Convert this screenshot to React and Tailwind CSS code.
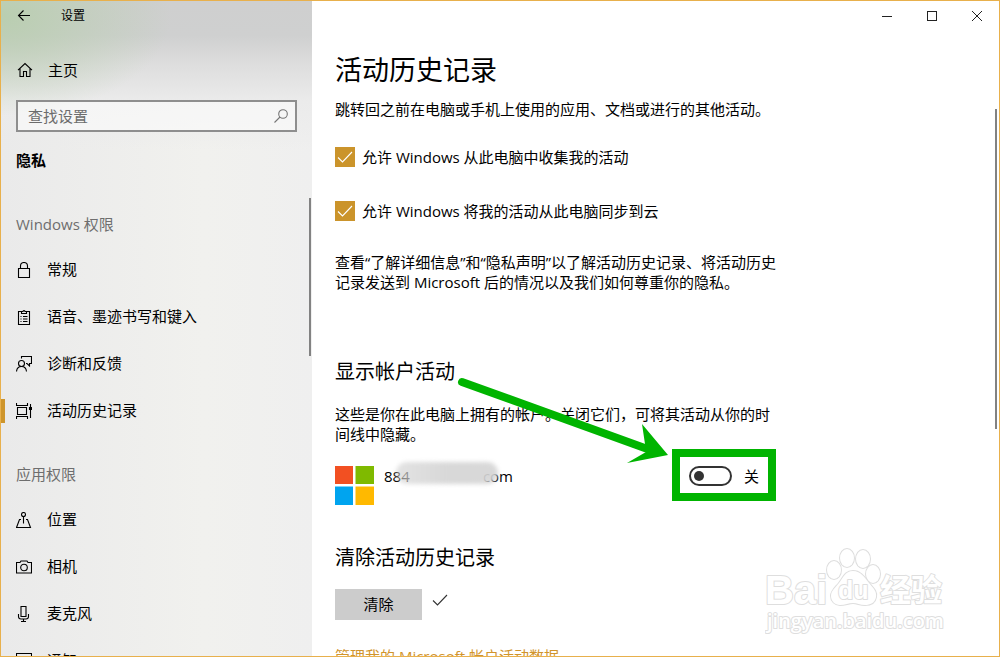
import React from 'react';

const icons = {
  back: <path d="M14 7.500H2.500M7.500 2.500l-5 5 5 5" />,
  home: <path d="M1 8.200 8 1.500l7 6.700M3 6.500v8h3.500v-5h3v5H13v-8" />,
  lock: <path d="M2.500 6.500h11v9h-11zM4.500 6.500V4a3.500 3.500 0 0 1 7 0v2.500" />,
  clipboard: (
    <path d="M5.500 2.500h-3v13h11v-13h-3M5.500 4.500v-2H7a1 1 0 0 1 2 0h1.500v2zM4.500 7.500h1M7 7.500h4.500M4.500 10h1M7 10h4.500M4.500 12.500h1M7 12.500h4.500" />
  ),
  feedback: (
    <>
      <circle cx="5.500" cy="7.500" r="3" />
      <path d="M.5 15.500c.3-3 2.200-5 5-5s4.700 2 5 5M5.500 2.500v-2h10v7h-2v2.500l-2.500-2.500h-1" />
    </>
  ),
  timeline: (
    <>
      <path d="M1.500 4.500h9v7h-9zM.5 0v2.500h11V0M.5 16v-2.500h11V16M14.500 1v3M14.500 7v8" />
      <path d="M13.500 4.500h2v2h-2z" fill="currentColor" />
    </>
  ),
  location: (
    <>
      <circle cx="7.500" cy="2.500" r="2" />
      <path d="M7.500 4.500v7M5 7.500H3.500l-3 8h14l-3-8H10" />
    </>
  ),
  camera: (
    <>
      <path d="M.5 3.500H4l1-1.500h6l1 1.500h3.500v10.500H.5z" />
      <circle cx="8" cy="8.500" r="3.300" />
    </>
  ),
  mic: <path d="M5 .5h5v10H5zM2.500 8v2.500c0 1.500 1 2.500 2.500 2.500h5c1.500 0 2.500-1 2.500-2.500V8M7.500 13v2.500M5 15.500h5" />,
  message: <path d="M.5.500h15v11H8l-3 3v-3H.5z" />,
  search: (
    <>
      <circle cx="10" cy="6" r="4.300" />
      <path d="M7 9 1.500 14.500" />
    </>
  ),
  check: <path d="m1 8.500 4.500 4.500L15 3" />,
};

const Icon = ({ name, className = '' }) => (
  <svg
    viewBox="0 0 16 16"
    className={`size-4 shrink-0 ${className}`}
    fill="none"
    stroke="currentColor"
    strokeWidth="1.100"
    aria-hidden="true"
  >
    {icons[name]}
  </svg>
);

const windowsItems = [
  { icon: 'lock', label: '常规' },
  { icon: 'clipboard', label: '语音、墨迹书写和键入' },
  { icon: 'feedback', label: '诊断和反馈' },
  { icon: 'timeline', label: '活动历史记录', active: true },
];

const appItems = [
  { icon: 'location', label: '位置' },
  { icon: 'camera', label: '相机' },
  { icon: 'mic', label: '麦克风' },
  { icon: 'message', label: '通知' },
];

const NavList = ({ title, items }) => (
  <section>
    <h2 className="px-[15px] leading-5 text-[#6e6e6e]">{title}</h2>
    <ul className="mt-3">
      {items.map((item) => (
        <li key={item.label}>
          <a href="#" className="flex h-[47px] items-center" aria-current={item.active ? 'page' : undefined}>
            <span className={`h-6 w-1 ${item.active ? 'bg-[#ce952b]' : ''}`} />
            <Icon name={item.icon} className="ml-[11px]" />
            <span className="ml-[15px]">{item.label}</span>
          </a>
        </li>
      ))}
    </ul>
  </section>
);

const Sidebar = () => (
  <aside className="relative w-[311px] shrink-0 overflow-hidden bg-[radial-gradient(ellipse_170px_100px_at_0_15px,#b9ceb0,transparent),linear-gradient(to_bottom,#cfcfcf_0,#cfd0d0_35px,#dedede_65px,#ebebeb_100px,transparent_150px),linear-gradient(to_right,#eaeaea,#f1f1ee_65%,#efefef)]">
    <div className="flex h-[30px] items-center pl-[15px] text-xs">
      <button type="button" aria-label="返回">
        <Icon name="back" />
      </button>
      <span className="ml-[29px]">设置</span>
    </div>
    <a href="#" className="mt-4 flex h-[46px] items-center pl-4">
      <Icon name="home" />
      <span className="ml-[15px]">主页</span>
    </a>
    <label className="mr-[15px] ml-[15px] mt-[7px] flex h-8 items-center border-2 border-[#8e8e8e] bg-white/50 pr-1.5 pl-2.5">
      <input
        type="text"
        aria-label="查找设置"
        placeholder="查找设置"
        className="min-w-0 flex-1 bg-transparent outline-none placeholder:text-[#6c6c6c]"
      />
      <Icon name="search" className="text-[#757575]" />
    </label>
    <h1 className="mt-[18px] px-[15px] leading-5 font-bold">隐私</h1>
    <nav className="mt-11 flex flex-col gap-[30px]">
      <NavList title="Windows 权限" items={windowsItems} />
      <NavList title="应用权限" items={appItems} />
    </nav>
    <div className="absolute top-[197px] right-px h-[158px] w-0.5 bg-[#828282]" />
  </aside>
);

const TitleButtons = () => (
  <div className="flex h-[30px] justify-end text-[#222]">
    <button type="button" aria-label="最小化" className="flex w-[45px] items-center justify-center">
      <span className="h-px w-2.5 bg-current" />
    </button>
    <button type="button" aria-label="最大化" className="flex w-[45px] items-center justify-center">
      <span className="size-2.5 border border-current" />
    </button>
    <button type="button" aria-label="关闭" className="flex w-[45px] items-center justify-center">
      <svg viewBox="0 0 10 10" className="size-2.5" stroke="currentColor" aria-hidden="true">
        <path d="M0 0 10 10M10 0 0 10" />
      </svg>
    </button>
  </div>
);

const CheckRow = ({ children }) => (
  <label className="flex h-5 items-center gap-[7px]">
    <span className="grid size-5 place-items-center bg-[#cb942b]">
      <input type="checkbox" defaultChecked className="col-start-1 row-start-1 size-5 appearance-none" />
      <Icon name="check" className="pointer-events-none col-start-1 row-start-1 text-white" />
    </span>
    <span>{children}</span>
  </label>
);

const Account = () => (
  <div className="mt-[22px] flex w-[424px] items-start">
    <svg viewBox="0 0 39 39" className="size-[39px]" aria-hidden="true">
      <path d="M0 0h18v18H0z" fill="#f25022" />
      <path d="M20.500 0H39v18H20.500z" fill="#7fba00" />
      <path d="M0 20.500h18V39H0z" fill="#00a4ef" />
      <path d="M20.500 20.500H39V39H20.500z" fill="#ffb900" />
    </svg>
    <div className="relative ml-[10px] flex h-5 w-[129px] items-center justify-between">
      <span>884</span>
      <span>com</span>
      <span className="absolute -top-1 left-3 h-[22px] w-[102px] rounded-xl bg-linear-to-r from-[#d0d0d0]/60 via-[#d8d8d8] to-[#d4d4d4]/90 blur-[2px]" />
    </div>
    <div className="ml-auto flex h-5 items-center gap-3">
      <button
        type="button"
        role="switch"
        aria-checked="false"
        aria-label="显示帐户活动"
        className="flex h-5 w-[43px] items-center rounded-full border-2 border-[#333] px-[3px]"
      >
        <span className="size-2.5 rounded-full bg-[#333]" />
      </button>
      <span>关</span>
    </div>
  </div>
);

// Green arrow and frame drawn on top of the settings page
const Annotation = () => (
  <svg
    viewBox="0 0 330 130"
    className="pointer-events-none absolute top-[373px] left-[454px] h-[130px] w-[330px]"
    aria-hidden="true"
  >
    <path d="M7 8 198 77" stroke="#00b400" strokeWidth="8" strokeLinecap="round" />
    <path d="m213 81-41 8 19-11-1-8-3-20z" fill="#00b400" />
    <path d="M221 79h96v44h-96z" fill="none" stroke="#00b400" strokeWidth="8" />
  </svg>
);

const Watermark = () => (
  <svg
    viewBox="0 0 190 94"
    className="pointer-events-none absolute right-[44px] bottom-[17px] h-[94px] w-[190px] [paint-order:stroke]"
    fill="#fff"
    stroke="#dedede"
    strokeWidth="2"
    strokeLinejoin="round"
    aria-hidden="true"
  >
    <text x="0" y="59" className="font-['Liberation_Sans',sans-serif] text-[40px] font-bold">Bai</text>
    <ellipse cx="69" cy="25" rx="7" ry="9" />
    <ellipse cx="82" cy="13" rx="7" ry="9" />
    <ellipse cx="98" cy="14" rx="7" ry="9" />
    <ellipse cx="108" cy="29" rx="7" ry="9" />
    <path d="M88 26c8 0 12 7 16 12s8 8 7 14-6 8-11 8-8-2-12-2-8 2-13 2-9-4-9-9 4-8 8-13 6-12 14-12z" />
    <text x="73" y="54" className="font-['Liberation_Sans',sans-serif] text-[25px] font-bold">du</text>
    <text x="115" y="56" className="font-['Noto_Sans_CJK_SC',sans-serif] text-[31px] font-bold">经验</text>
    <text x="2" y="83" className="font-['Open_Sans',sans-serif] text-[20px] font-semibold">jingyan.baidu.com</text>
  </svg>
);

export default function App() {
  return (
    <div className="relative flex h-screen overflow-hidden border border-[#e8b04c] bg-white font-['Open_Sans','Noto_Sans_CJK_SC',sans-serif] text-[15px] text-black">
      <Sidebar />
      <main className="min-w-0 flex-1">
        <TitleButtons />
        <div className="pt-[21px] pl-[23px]">
          <h1 className="text-[27px] leading-9">活动历史记录</h1>
          <p className="mt-[11px] leading-5">跳转回之前在电脑或手机上使用的应用、文档或进行的其他活动。</p>
          <div className="mt-7 flex flex-col gap-[34px]">
            <CheckRow>允许 Windows 从此电脑中收集我的活动</CheckRow>
            <CheckRow>允许 Windows 将我的活动从此电脑同步到云</CheckRow>
          </div>
          <p className="mt-[31px] max-w-md leading-5">
            查看“了解详细信息”和“隐私声明”以了解活动历史记录、将活动历史记录发送到 Microsoft 后的情况以及我们如何尊重你的隐私。
          </p>
          <h2 className="mt-[66px] text-xl leading-7">显示帐户活动</h2>
          <p className="mt-[18px] max-w-md leading-5">
            这些是你在此电脑上拥有的帐户。关闭它们，可将其活动从你的时间线中隐藏。
          </p>
          <Account />
          <h2 className="mt-[39px] text-xl leading-7">清除活动历史记录</h2>
          <div className="mt-[17px] flex h-[31px] gap-[10px]">
            <button type="button" className="w-[87px] bg-[#ccc]">清除</button>
            <Icon name="check" className="mt-[3px] text-[#333]" />
          </div>
          <a href="#" className="mt-[26px] block leading-5 text-[#d1942c]">管理我的 Microsoft 帐户活动数据</a>
        </div>
      </main>
      <div className="absolute top-[108px] right-0.5 h-[320px] w-0.5 bg-[#828282]" />
      <Annotation />
      <Watermark />
    </div>
  );
}
